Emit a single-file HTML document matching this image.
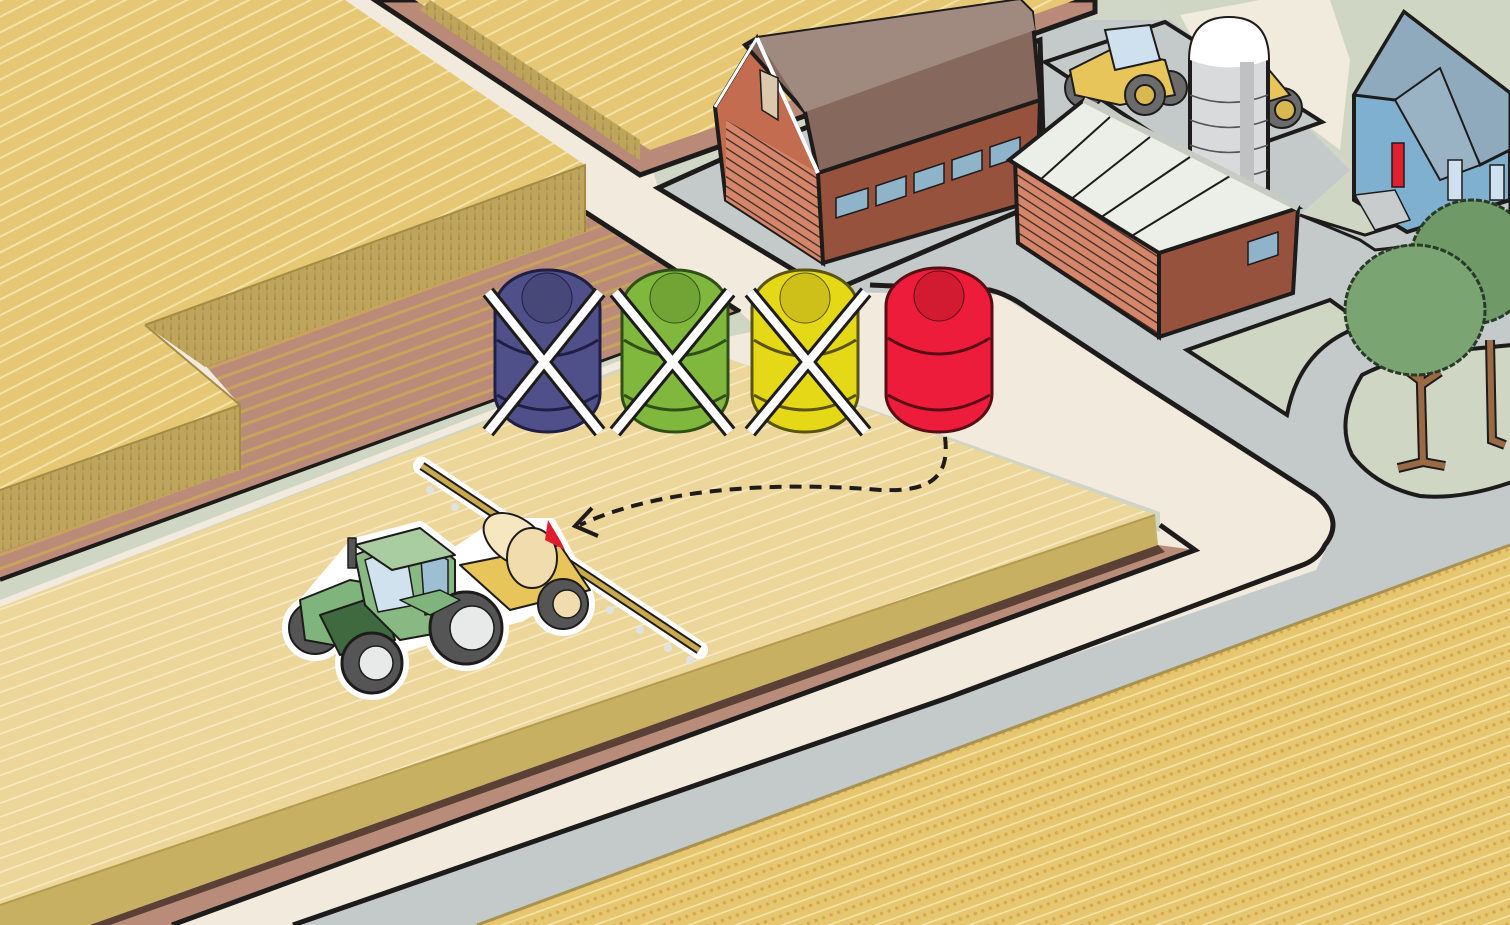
<!DOCTYPE html>
<html><head><meta charset="utf-8"><style>html,body{margin:0;padding:0;background:#d1d7c6;overflow:hidden}svg{display:block}</style></head><body>
<svg width="1510" height="925" viewBox="0 0 1510 925" xmlns="http://www.w3.org/2000/svg">
<defs>
<pattern id="pTL" width="14" height="14" patternUnits="userSpaceOnUse" patternTransform="rotate(-27)"><rect width="14" height="14" fill="#e6c874"/><rect y="0" width="14" height="2" fill="#f4e2a9"/></pattern>
<pattern id="pMid" width="13" height="13" patternUnits="userSpaceOnUse" patternTransform="rotate(-20)"><rect width="13" height="13" fill="#edd699"/><rect y="0" width="13" height="1.6" fill="#f7eac4"/></pattern>
<pattern id="pBot" width="16" height="16" patternUnits="userSpaceOnUse" patternTransform="rotate(-20)"><rect width="16" height="16" fill="#e6c76f"/><rect y="0" width="16" height="1.6" fill="#f5e4a9"/><circle cx="4" cy="8" r="1.8" fill="#d4a952"/><circle cx="12" cy="8" r="1.8" fill="#d4a952"/></pattern>
<pattern id="pBr" width="13" height="13" patternUnits="userSpaceOnUse" patternTransform="rotate(-20)"><rect width="13" height="13" fill="#ba8b79"/><rect y="0" width="13" height="3" fill="#c9a35c"/></pattern>
<pattern id="pFace" width="8" height="10" patternUnits="userSpaceOnUse"><rect width="8" height="10" fill="#bea55b"/><path d="M2 10 L3 0 L4 10Z" fill="#a58c45"/></pattern>
<pattern id="pSide" width="10" height="8" patternUnits="userSpaceOnUse" patternTransform="rotate(33)"><rect width="10" height="8" fill="#d4856a"/><rect y="0" width="10" height="1.3" fill="#3a2a22"/></pattern>
</defs>

<rect width="1510" height="925" fill="#d1d7c6"/>
<polygon points="658,188 1050,20 1510,20 1510,925 293,925 950,697 1316,570 1335,530 1323,500 1136,380 1000,295 830,292" fill="#c4c9ca"/>
<polygon points="345,0 420,0 650,160 658,188 830,292 1000,295 1136,380 1323,500 1335,530 1316,570 950,697 293,925 0,925 0,560" fill="#f2eadd"/>
<path d="M870,285 L990,290 Q1010,295 1030,310 L1136,380 L1315,495 Q1345,520 1325,545 Q1318,560 1300,566 L950,697 L293,925" fill="none" stroke="#1e1b1b" stroke-width="5"/>
<polygon points="658,188 720,160 1040,40 1045,200 830,292" fill="#c4c9ca" stroke="#1e1b1b" stroke-width="5"/>

<polygon points="1150,0 1510,0 1510,195 1365,235 1300,215 1350,170 1290,110 1170,20" fill="#d0d6c4"/>
<polygon points="1180,15 1260,0 1330,0 1350,60 1340,150 1300,120 1210,70" fill="#f1ebdd"/>
<polygon points="1045,62 1165,22 1322,122 1200,165" fill="#c4c9ca" stroke="#1e1b1b" stroke-width="4"/>
<polygon points="1300,215 1365,235 1510,190 1510,235 1375,250 1360,240" fill="#c4c9ca" stroke="#1e1b1b" stroke-width="3"/>
<path d="M1187,350 L1330,300 L1365,325 Q1300,345 1287,415 Z" fill="#d0d6c4" stroke="#1e1b1b" stroke-width="4"/>
<path d="M1362,375 Q1400,355 1460,350 L1512,345 L1512,482 Q1460,500 1420,496 Q1375,486 1352,455 Q1335,420 1362,375Z" fill="#d0d6c4" stroke="#1e1b1b" stroke-width="4"/>

<polygon points="477,925 950,751 1510,545 1510,925" fill="url(#pBot)"/>
<path d="M477,925 L950,751 L1510,545" stroke="#a8924f" stroke-width="3" fill="none"/>

<polygon points="375,0 1095,0 1095,12 640,175" fill="#b98a78" stroke="#1e1b1b" stroke-width="5"/>
<polygon points="415,0 1075,0 650,150" fill="url(#pTL)"/>
<polygon points="430,0 640,140 640,160 420,10" fill="url(#pFace)"/>

<polygon points="0,550 240,470 240,405 205,365 585,230 585,215 740,312 0,580" fill="url(#pBr)"/>
<path d="M0,580 L740,312 M585,212 L740,312" stroke="#1e1b1b" stroke-width="5" fill="none"/>
<polygon points="0,0 345,0 585,165 145,325 240,405 0,490" fill="url(#pTL)"/>
<polygon points="145,325 585,165 585,232 205,367" fill="url(#pFace)"/>
<polygon points="0,490 240,405 240,470 0,552" fill="url(#pFace)"/>
<path d="M145,325 L585,165 L585,232 M145,325 L240,405 L240,470 M0,490 L240,405" stroke="#a58c45" stroke-width="2" fill="none"/>

<polygon points="0,582 740,312 760,330 690,345 0,610" fill="#cfd6c4"/>
<polygon points="0,600 720,322 725,328 0,607" fill="#f2eadd"/>
<polygon points="690,345 1160,512 1160,532 690,362" fill="#cfd6c4"/>
<polygon points="0,607 690,345 1155,515 0,905" fill="url(#pMid)"/>
<polygon points="0,905 1155,515 1158,545 90,925 0,925" fill="#c8b062"/>
<path d="M0,905 L1155,515" stroke="#b39b50" stroke-width="2"/>
<polygon points="90,925 1158,545 1195,550 175,925" fill="#b98b79"/>
<polygon points="90,925 1158,545 1165,552 110,925" fill="#5a4035"/>
<path d="M1160,525 L1195,550 L172,925" stroke="#1e1b1b" stroke-width="5" fill="none"/>

<!-- barn -->
<polygon points="715,107 757,38 818,173 823,263 726,200" fill="#c46c50" stroke="#1e1b1b" stroke-width="4"/>
<polygon points="726,120 818,173 823,263 726,200" fill="url(#pSide)"/>
<polygon points="818,173 1040,100 1037,200 823,263" fill="#96523c" stroke="#1e1b1b" stroke-width="4"/>
<g fill="#8fb3c8" stroke="#1e1b1b" stroke-width="1.5">
<polygon points="836,198 868,188 868,208 836,218"/><polygon points="876,186 906,176 906,196 876,206"/><polygon points="914,173 944,163 944,183 914,193"/><polygon points="952,160 982,150 982,170 952,180"/><polygon points="990,147 1020,137 1020,157 990,167"/>
</g>
<polygon points="745,45 757,38 1020,0 1032,12 1040,100 818,173 805,112" fill="#86695c" stroke="#1e1b1b" stroke-width="4"/>
<polygon points="757,38 1020,0 1032,12 1035,30 805,112" fill="#a08a80"/>
<path d="M757,38 L818,173" stroke="#fff" stroke-width="4"/>
<path d="M757,38 L715,107" stroke="#fff" stroke-width="3"/>
<polygon points="760,70 778,78 778,120 762,110" fill="#dcc8ac" stroke="#1e1b1b" stroke-width="1.5"/>

<!-- yellow tractor -->
<g stroke="#1e1b1b" stroke-width="2">
<circle cx="1085" cy="88" r="20" fill="#6b6b6b"/><circle cx="1170" cy="88" r="17" fill="#6b6b6b"/><circle cx="1282" cy="108" r="20" fill="#6b6b6b"/>
<polygon points="1070,70 1110,50 1165,60 1175,95 1120,105 1075,95" fill="#e8c55a"/>
<polygon points="1105,30 1150,25 1160,60 1115,70" fill="#cfe1ee"/>
<polygon points="1215,90 1265,65 1290,95 1240,110" fill="#e8c55a"/>
<circle cx="1145" cy="95" r="20" fill="#6b6b6b"/><circle cx="1145" cy="95" r="10" fill="#d9b94f"/>
<circle cx="1285" cy="110" r="10" fill="#d9b94f"/>
</g>

<!-- silo -->
<path d="M1190,60 Q1190,18 1229,18 Q1268,18 1268,60 L1268,190 L1190,190 Z" fill="#d9dadb" stroke="#1e1b1b" stroke-width="4"/>
<path d="M1190,60 Q1190,18 1229,18 Q1268,18 1268,60 Q1229,75 1190,60Z" fill="#fff"/>
<g stroke="#555" stroke-width="1.5" fill="none"><path d="M1190,95 Q1229,110 1268,95"/><path d="M1190,120 Q1229,135 1268,120"/><path d="M1190,145 Q1229,160 1268,145"/><path d="M1190,170 Q1229,185 1268,170"/></g>
<rect x="1240" y="62" width="14" height="120" fill="#bfc1c3"/>

<!-- shed -->
<polygon points="1015,160 1159,253 1159,337 1018,243" fill="url(#pSide)" stroke="#1e1b1b" stroke-width="4"/>
<polygon points="1159,253 1298,208 1293,293 1159,337" fill="#96523c" stroke="#1e1b1b" stroke-width="4"/>
<polygon points="1248,242 1278,232 1278,255 1248,265" fill="#8fb3c8" stroke="#1e1b1b" stroke-width="1.5"/>
<polygon points="1009,160 1084,100 1298,208 1159,253" fill="#eceee8" stroke="#1e1b1b" stroke-width="4"/>
<g stroke="#1e1b1b" stroke-width="2"><line x1="1040" y1="180" x2="1110" y2="117"/><line x1="1070" y1="200" x2="1150" y2="137"/><line x1="1100" y1="218" x2="1190" y2="157"/><line x1="1130" y1="237" x2="1230" y2="176"/></g>
<path d="M1084,100 L1298,208" stroke="#c7ccc2" stroke-width="6"/>

<!-- house -->
<polygon points="1354,95 1404,12 1510,93 1510,200 1407,232 1354,200" fill="#7fb0d0" stroke="#1e1b1b" stroke-width="4"/>
<polygon points="1354,95 1404,12 1510,93 1510,150 1480,165 1440,80 1395,100" fill="#8faabd" stroke="#1e1b1b" stroke-width="3"/>
<polygon points="1395,100 1440,68 1480,165 1440,180" fill="#9ab3c4" stroke="#1e1b1b" stroke-width="2"/>
<rect x="1392" y="143" width="12" height="44" fill="#e0202f" stroke="#1e1b1b" stroke-width="1.5"/>
<polygon points="1355,195 1395,190 1410,220 1375,230" fill="#c8cccd" stroke="#1e1b1b" stroke-width="1.5"/>
<rect x="1448" y="160" width="14" height="40" fill="#cfe1ee" stroke="#1e1b1b" stroke-width="1.5"/>
<rect x="1490" y="165" width="14" height="35" fill="#cfe1ee" stroke="#1e1b1b" stroke-width="1.5"/>

<!-- trees -->
<path d="M1490,340 L1492,440 L1505,445" stroke="#1e1b1b" stroke-width="10" fill="none"/>
<path d="M1490,340 L1492,440 L1505,445" stroke="#9a6a45" stroke-width="6" fill="none"/>
<circle cx="1472" cy="262" r="62" fill="#6f9a68" stroke="#2a3a28" stroke-width="3" stroke-dasharray="6 2"/>
<path d="M1420,350 L1423,462 M1423,462 L1398,468 M1423,462 L1445,466 M1420,380 L1400,365 M1421,385 L1440,372" stroke="#1e1b1b" stroke-width="10" fill="none"/>
<path d="M1420,350 L1423,462 M1423,462 L1398,468 M1423,462 L1445,466 M1420,380 L1400,365 M1421,385 L1440,372" stroke="#9a6a45" stroke-width="6" fill="none"/>
<ellipse cx="1415" cy="310" rx="70" ry="65" fill="#7aa573" stroke="#2a3a28" stroke-width="3" stroke-dasharray="6 2"/>

<!-- barrels -->
<g stroke-width="3">
<g fill="#4f508a" stroke="#1f1f45"><rect x="495" y="270" width="105" height="162" rx="52" ry="38"/><path d="M497,340 Q547,372 598,340" fill="none"/><path d="M497,395 Q547,425 598,395" fill="none"/><circle cx="547" cy="298" r="25" fill="#474878" stroke-width="1"/></g>
<g fill="#80b83e" stroke="#2f4f17"><rect x="622" y="270" width="106" height="162" rx="52" ry="38"/><path d="M624,340 Q675,372 726,340" fill="none"/><path d="M624,395 Q675,425 726,395" fill="none"/><circle cx="675" cy="298" r="25" fill="#71a434" stroke-width="1"/></g>
<g fill="#e5d817" stroke="#5a5410"><rect x="752" y="270" width="106" height="162" rx="52" ry="38"/><path d="M754,340 Q805,372 856,340" fill="none"/><path d="M754,395 Q805,425 856,395" fill="none"/><circle cx="805" cy="298" r="25" fill="#cfc019" stroke-width="1"/></g>
<g fill="#ec1c3a" stroke="#5a0c14"><rect x="886" y="268" width="106" height="164" rx="52" ry="38"/><path d="M888,338 Q939,370 990,338" fill="none"/><path d="M888,395 Q939,425 990,395" fill="none"/><circle cx="939" cy="296" r="25" fill="#d21a30" stroke-width="1"/></g>
</g>
<g fill="none">
<path d="M488,292 L600,432 M600,292 L488,432 M615,292 L730,432 M730,292 L615,432 M750,292 L866,432 M866,292 L750,432" stroke="#1e1b1b" stroke-width="14"/>
<path d="M488,292 L600,432 M600,292 L488,432 M615,292 L730,432 M730,292 L615,432 M750,292 L866,432 M866,292 L750,432" stroke="#fff" stroke-width="8"/>
</g>

<!-- arrow -->
<path d="M945,437 C950,478 930,492 880,490 C760,480 650,492 580,525" fill="none" stroke="#1e1b1b" stroke-width="4" stroke-dasharray="12 8"/>
<path d="M592,508 L575,526 L598,536" fill="none" stroke="#1e1b1b" stroke-width="4"/>

<!-- sprayer tractor -->
<g stroke-linejoin="round">
<path d="M422,466 L699,650" stroke="#fff" stroke-width="18" stroke-linecap="round"/>
<g stroke="#fff" stroke-width="14" fill="#fff">
<circle cx="563" cy="604" r="25"/><circle cx="466" cy="628" r="36"/><circle cx="372" cy="663" r="30"/><circle cx="315" cy="628" r="26"/>
<polygon points="355,545 420,528 455,555 500,525 550,525 580,580 520,615 420,640 360,660 300,610"/>
</g>
<path d="M422,466 L699,650" stroke="#1e1b1b" stroke-width="9"/>
<path d="M422,466 L699,650" stroke="#c9a94c" stroke-width="5"/>
<g fill="#e0e3e4"><circle cx="430" cy="490" r="4"/><circle cx="455" cy="507" r="4"/><circle cx="610" cy="610" r="4"/><circle cx="640" cy="630" r="4"/><circle cx="668" cy="648" r="4"/><circle cx="690" cy="660" r="4"/></g>
<polygon points="460,565 560,545 590,590 510,610" fill="#e8c55a" stroke="#1e1b1b" stroke-width="2"/>
<ellipse cx="515" cy="540" rx="35" ry="22" transform="rotate(35 515 540)" fill="#f7e7c0" stroke="#1e1b1b" stroke-width="2"/>
<ellipse cx="532" cy="558" rx="25" ry="30" fill="#f0dcac" stroke="#1e1b1b" stroke-width="2"/>
<polygon points="548,520 560,540 565,550 545,540" fill="#e01d2e"/>
<circle cx="563" cy="604" r="25" fill="#555" stroke="#1e1b1b" stroke-width="2"/><circle cx="567" cy="604" r="14" fill="#f0dcac" stroke="#1e1b1b" stroke-width="1.5"/>
<circle cx="315" cy="628" r="26" fill="#555" stroke="#1e1b1b" stroke-width="2"/>
<polygon points="300,600 350,580 410,590 420,620 360,650 305,640" fill="#7fb47c" stroke="#1e1b1b" stroke-width="2"/>
<polygon points="320,615 380,595 395,640 340,655" fill="#3f6a40" stroke="#1e1b1b" stroke-width="2"/>
<polygon points="355,555 420,530 455,560 455,630 400,640 365,605" fill="#88b982" stroke="#1e1b1b" stroke-width="2"/>
<polygon points="365,560 405,545 415,605 378,612" fill="#cfe2ee" stroke="#1e1b1b" stroke-width="1.5"/>
<polygon points="420,545 448,560 448,610 425,615" fill="#9dbfd4" stroke="#1e1b1b" stroke-width="1.5"/>
<polygon points="355,545 420,528 455,555 392,570" fill="#a9cca0" stroke="#1e1b1b" stroke-width="2"/>
<rect x="348" y="538" width="8" height="30" fill="#555" stroke="#1e1b1b" stroke-width="1.5"/>
<circle cx="466" cy="628" r="36" fill="#555" stroke="#1e1b1b" stroke-width="3"/><circle cx="472" cy="628" r="22" fill="#e8eaea" stroke="#1e1b1b" stroke-width="1.5"/>
<circle cx="372" cy="663" r="30" fill="#555" stroke="#1e1b1b" stroke-width="3"/><circle cx="376" cy="663" r="17" fill="#e8eaea" stroke="#1e1b1b" stroke-width="1.5"/>
<polygon points="400,600 440,590 460,600 430,615" fill="#7fb47c" stroke="#1e1b1b" stroke-width="1.5"/>
</g>
</svg>
</body></html>
